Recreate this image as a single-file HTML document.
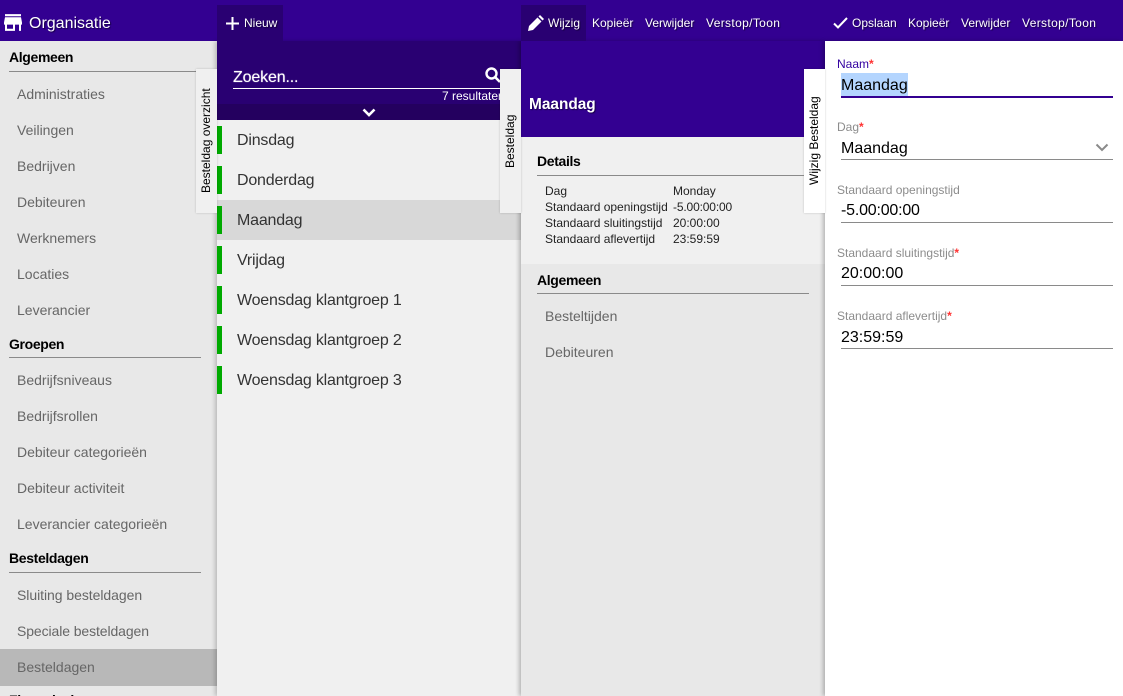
<!DOCTYPE html>
<html><head><meta charset="utf-8"><style>
html,body{margin:0;padding:0;width:1123px;height:696px;overflow:hidden}
body{background:#fff;font-family:"Liberation Sans",sans-serif}
#w{position:absolute;left:0;top:0;width:1123px;height:696px;overflow:hidden;background:#fff}
#w div,span.t{position:absolute}
.t{white-space:nowrap;line-height:1}
.b{position:absolute}
.hd{color:#fff;font-size:12px;top:17px;text-shadow:1px 1px 1px rgba(0,0,0,.5)}
.sh{color:#000;font-size:14px;font-weight:bold;left:9px;letter-spacing:-.35px}
.ln{height:1px;background:#8a8a8a}
.it{color:#666;font-size:14px;left:17px}
.li{color:#333;font-size:16px;left:237px;letter-spacing:-.2px}
#w .bar{left:217px;width:5px;height:28px;background:#0a0}
.lab{color:#8c8c8c;font-size:12px;left:837px}
.lab i{color:#f33;font-style:normal;font-weight:bold}
.val{color:#000;font-size:16px;left:841px}
#w .ul{left:841px;width:272px;height:1px;background:#8a8a8a}
.d{color:#222;font-size:12px}
.tab{font-size:12px;color:#000;transform:rotate(-90deg);transform-origin:0 0}
</style></head><body><div id="w">
<div style="left:0;top:0;width:1123px;height:41px;background:#330091"></div>
<div style="left:0;top:41px;width:217px;height:655px;background:#e8e8e8"></div>
<div style="left:0;top:649px;width:217px;height:37px;background:#b8b8b8"></div>
<div style="left:217px;top:41px;width:304px;height:655px;background:#f0f0f0;box-shadow:-2px 0 4px rgba(0,0,0,.2)"></div>
<div style="left:217px;top:5px;width:66px;height:36px;background:#290072"></div>
<div style="left:217px;top:41px;width:304px;height:63px;background:#290072"></div>
<div style="left:217px;top:104px;width:304px;height:16px;background:#24005f"></div>
<div style="left:217px;top:200px;width:304px;height:40px;background:#d8d8d8"></div>
<div style="left:521px;top:41px;width:304px;height:655px;background:#e8e8e8;box-shadow:-2px 0 4px rgba(0,0,0,.25)"></div>
<div style="left:521px;top:5px;width:65px;height:36px;background:#290072"></div>
<div style="left:521px;top:41px;width:304px;height:96px;background:#330091"></div>
<div style="left:521px;top:137px;width:304px;height:127px;background:#f0f0f0"></div>
<div style="left:825px;top:41px;width:298px;height:655px;background:#fff;box-shadow:-2px 0 4px rgba(0,0,0,.25)"></div>

<svg class="b" style="left:1px;top:10px" width="24" height="25" viewBox="0 0 24 24" preserveAspectRatio="none"><path fill="#fff" d="M20 4H4v2h16V4zm1 10v-2l-1-5H4l-1 5v2h1v6h10v-6h4v6h2v-6h1zm-9 4H6v-4h6v4z"/></svg>
<span class="t" style="left:29px;top:16px;color:#fff;font-size:16px;text-shadow:1px 1px 1px rgba(0,0,0,.5)">Organisatie</span>

<svg class="b" style="left:226px;top:17px" width="13" height="13" viewBox="0 0 13 13"><path fill="#fff" d="M5.500 0h2v5.500h5.500v2H7.500V13h-2V7.500H0v-2h5.500z"/></svg>
<span class="t hd" style="left:244px">Nieuw</span>
<svg class="b" style="left:528px;top:15px" width="16" height="16" viewBox="0 0 16 16"><path fill="#fff" d="M0 16l1-5 8.500-8.500 4 4L5 15zM10.500 1.500L12 0l4 4-1.500 1.500z"/></svg>
<span class="t hd" style="left:548px">Wijzig</span>
<span class="t hd" style="left:592px">Kopieër</span>
<span class="t hd" style="left:645px">Verwijder</span>
<span class="t hd" style="left:706px;letter-spacing:.35px">Verstop/Toon</span>
<svg class="b" style="left:833px;top:17px" width="15" height="12" viewBox="0 0 15 12"><path fill="none" stroke="#fff" stroke-width="2" d="M1 6.500l4 4L14 1"/></svg>
<span class="t hd" style="left:852px">Opslaan</span>
<span class="t hd" style="left:908px">Kopieër</span>
<span class="t hd" style="left:961px">Verwijder</span>
<span class="t hd" style="left:1022px;letter-spacing:.35px">Verstop/Toon</span>

<span class="t sh" style="top:50px">Algemeen</span><div class="ln" style="left:9px;top:71px;width:192px"></div>
<span class="t it" style="top:87px">Administraties</span>
<span class="t it" style="top:123px">Veilingen</span>
<span class="t it" style="top:159px">Bedrijven</span>
<span class="t it" style="top:195px">Debiteuren</span>
<span class="t it" style="top:231px">Werknemers</span>
<span class="t it" style="top:267px">Locaties</span>
<span class="t it" style="top:303px">Leverancier</span>
<span class="t sh" style="top:337px">Groepen</span><div class="ln" style="left:9px;top:357px;width:192px"></div>
<span class="t it" style="top:373px">Bedrijfsniveaus</span>
<span class="t it" style="top:409px">Bedrijfsrollen</span>
<span class="t it" style="top:445px">Debiteur categorieën</span>
<span class="t it" style="top:481px">Debiteur activiteit</span>
<span class="t it" style="top:517px">Leverancier categorieën</span>
<span class="t sh" style="top:551px">Besteldagen</span><div class="ln" style="left:9px;top:572px;width:192px"></div>
<span class="t it" style="top:588px;letter-spacing:-.05px">Sluiting besteldagen</span>
<span class="t it" style="top:624px;letter-spacing:-.1px">Speciale besteldagen</span>
<span class="t it" style="top:660px">Besteldagen</span>
<span class="t sh" style="top:693px">Financieel</span>

<span class="t" style="left:233px;top:70px;color:#fff;font-size:16px;letter-spacing:-.15px;text-shadow:0 0 1px rgba(255,255,255,.7)">Zoeken...</span>
<div style="left:233px;top:88px;width:267px;height:1px;background:#fff"></div>
<svg class="b" style="left:485px;top:67px" width="16" height="16" viewBox="0 0 16 16"><circle cx="6.500" cy="6.500" r="5" fill="none" stroke="#fff" stroke-width="2.400"/><path d="M10.500 10.500L15 15" stroke="#fff" stroke-width="2.600"/></svg>
<span class="t" style="left:442px;top:90px;color:#fff;font-size:12px;width:58px;overflow:hidden;display:block">7 resultaten</span>
<svg class="b" style="left:362px;top:108px" width="14" height="9" viewBox="0 0 14 9"><path fill="none" stroke="#fff" stroke-width="2.600" d="M1.500 1.500L7 7l5.500-5.500"/></svg>

<div class="bar" style="top:126px"></div><span class="t li" style="top:133px">Dinsdag</span>
<div class="bar" style="top:166px"></div><span class="t li" style="top:173px">Donderdag</span>
<div class="bar" style="top:206px"></div><span class="t li" style="top:213px">Maandag</span>
<div class="bar" style="top:246px"></div><span class="t li" style="top:253px">Vrijdag</span>
<div class="bar" style="top:286px"></div><span class="t li" style="top:293px">Woensdag klantgroep 1</span>
<div class="bar" style="top:326px"></div><span class="t li" style="top:333px">Woensdag klantgroep 2</span>
<div class="bar" style="top:366px"></div><span class="t li" style="top:373px">Woensdag klantgroep 3</span>

<div style="left:196px;top:69px;width:21px;height:144px;background:#f0f0f0;box-shadow:0 0 2px rgba(0,0,0,.2)"></div>
<span class="t tab" style="left:200px;top:193px">Besteldag overzicht</span>
<div style="left:500px;top:69px;width:21px;height:144px;background:#f0f0f0;box-shadow:0 0 2px rgba(0,0,0,.2)"></div>
<span class="t tab" style="left:504px;top:168px">Besteldag</span>
<div style="left:804px;top:69px;width:21px;height:144px;background:#fff;box-shadow:0 0 2px rgba(0,0,0,.2)"></div>
<span class="t tab" style="left:808px;top:185px">Wijzig Besteldag</span>

<span class="t" style="left:529px;top:97px;color:#fff;font-size:15.4px;font-weight:bold;text-shadow:1px 1px 1px rgba(0,0,0,.5)">Maandag</span>
<span class="t sh" style="left:537px;top:154px">Details</span><div class="ln" style="left:537px;top:175px;width:267px"></div>
<span class="t d" style="left:545px;top:185px">Dag</span><span class="t d" style="left:673px;top:185px">Monday</span>
<span class="t d" style="left:545px;top:201px">Standaard openingstijd</span><span class="t d" style="left:673px;top:201px;letter-spacing:-.15px">-5.00:00:00</span>
<span class="t d" style="left:545px;top:217px">Standaard sluitingstijd</span><span class="t d" style="left:673px;top:217px">20:00:00</span>
<span class="t d" style="left:545px;top:233px">Standaard aflevertijd</span><span class="t d" style="left:673px;top:233px">23:59:59</span>
<span class="t sh" style="left:537px;top:273px">Algemeen</span><div class="ln" style="left:537px;top:293px;width:272px"></div>
<span class="t it" style="left:545px;top:309px">Besteltijden</span>
<span class="t it" style="left:545px;top:345px">Debiteuren</span>

<span class="t lab" style="top:58px;color:#3300a0">Naam<i>*</i></span>
<div style="left:841px;top:73px;width:67px;height:23px;background:#b4d5fe"></div>
<span class="t val" style="top:78px">Maandag</span>
<div class="ul" style="top:96px;height:2px;background:#330091"></div>
<span class="t lab" style="top:121px">Dag<i>*</i></span>
<span class="t val" style="top:141px">Maandag</span>
<svg class="b" style="left:1095px;top:143px" width="14" height="9" viewBox="0 0 14 9"><path fill="none" stroke="#8a8a8a" stroke-width="2" d="M1.500 1.500L7 7l5.500-5.500"/></svg>
<div class="ul" style="top:159px"></div>
<span class="t lab" style="top:184px">Standaard openingstijd</span>
<span class="t val" style="top:203px;letter-spacing:-.2px">-5.00:00:00</span>
<div class="ul" style="top:222px"></div>
<span class="t lab" style="top:247px">Standaard sluitingstijd<i>*</i></span>
<span class="t val" style="top:266px">20:00:00</span>
<div class="ul" style="top:285px"></div>
<span class="t lab" style="top:310px">Standaard aflevertijd<i>*</i></span>
<span class="t val" style="top:330px">23:59:59</span>
<div class="ul" style="top:348px"></div>
</div></body></html>
